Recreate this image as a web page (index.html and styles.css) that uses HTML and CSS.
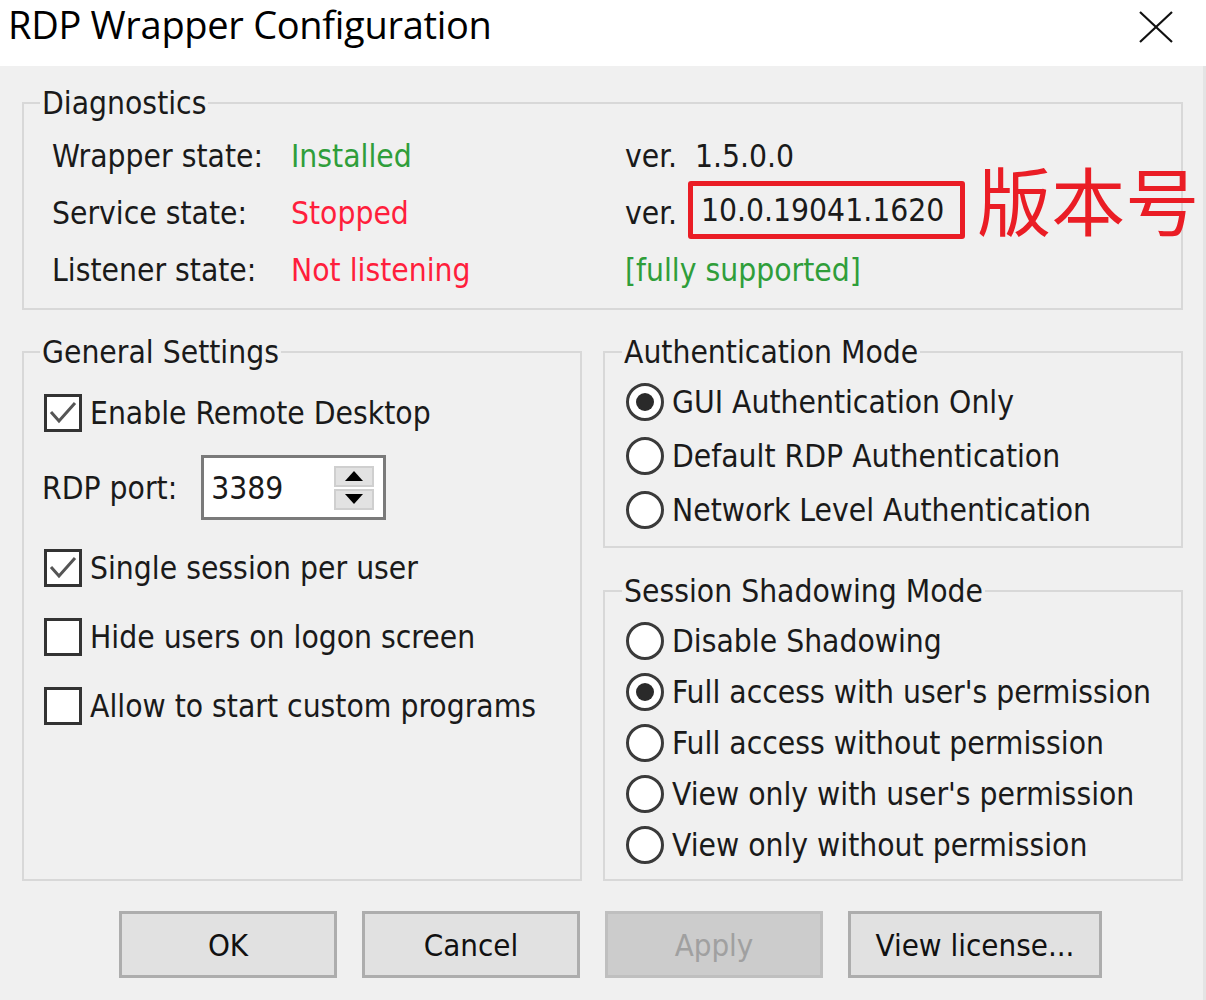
FILE: index.html
```html
<!DOCTYPE html>
<html>
<head>
<meta charset="utf-8">
<title>RDP Wrapper Configuration</title>
<link rel="stylesheet" href="styles.css">
</head>
<body>
<div class="window">
  <div class="titlebar">
    <div class="title">RDP Wrapper Configuration</div>
    <svg class="close" width="34" height="32" viewBox="0 0 34 32"><path d="M1 1 L33 31 M33 1 L1 31" stroke="#111" stroke-width="2.2" fill="none"/></svg>
  </div>
  <div class="content">
    <fieldset class="group diag">
      <legend>Diagnostics</legend>
      <div class="diag-grid">
        <div class="cell">Wrapper state:</div>
        <div class="cell ok">Installed</div>
        <div class="cell">ver.&nbsp; 1.5.0.0</div>
        <div class="cell">Service state:</div>
        <div class="cell bad">Stopped</div>
        <div class="cell">ver.<span class="mark">10.0.19041.1620</span><span class="note">版本号</span></div>
        <div class="cell">Listener state:</div>
        <div class="cell bad">Not listening</div>
        <div class="cell ok">[fully supported]</div>
      </div>
    </fieldset>

    <div class="columns">
      <fieldset class="group general">
        <legend>General Settings</legend>
        <div class="check-row"><span class="box checked"><svg viewBox="0 0 32 32" width="32" height="32"><path d="M4 15 L12 24 L28 6" stroke="#555" stroke-width="3" fill="none"/></svg></span>Enable Remote Desktop</div>
        <div class="port-row">
          <span class="port-label">RDP port:</span>
          <div class="spin">
            <span class="spin-value">3389</span>
            <div class="spin-btns">
              <span class="spin-btn"><svg width="20" height="12" viewBox="0 0 20 12"><path d="M10 1 L19 11 L1 11 Z" fill="#000"/></svg></span>
              <span class="spin-btn"><svg width="20" height="12" viewBox="0 0 20 12"><path d="M1 1 L19 1 L10 11 Z" fill="#000"/></svg></span>
            </div>
          </div>
        </div>
        <div class="check-row"><span class="box checked"><svg viewBox="0 0 32 32" width="32" height="32"><path d="M4 15 L12 24 L28 6" stroke="#555" stroke-width="3" fill="none"/></svg></span>Single session per user</div>
        <div class="check-row"><span class="box"></span>Hide users on logon screen</div>
        <div class="check-row"><span class="box"></span>Allow to start custom programs</div>
      </fieldset>

      <div class="right-col">
        <fieldset class="group auth">
          <legend>Authentication Mode</legend>
          <div class="radio-row"><span class="radio on"></span>GUI Authentication Only</div>
          <div class="radio-row"><span class="radio"></span>Default RDP Authentication</div>
          <div class="radio-row"><span class="radio"></span>Network Level Authentication</div>
        </fieldset>
        <fieldset class="group shadow">
          <legend>Session Shadowing Mode</legend>
          <div class="radio-row"><span class="radio"></span>Disable Shadowing</div>
          <div class="radio-row"><span class="radio on"></span>Full access with user's permission</div>
          <div class="radio-row"><span class="radio"></span>Full access without permission</div>
          <div class="radio-row"><span class="radio"></span>View only with user's permission</div>
          <div class="radio-row"><span class="radio"></span>View only without permission</div>
        </fieldset>
      </div>
    </div>

    <div class="buttons">
      <button class="btn">OK</button>
      <button class="btn">Cancel</button>
      <button class="btn disabled">Apply</button>
      <button class="btn wide">View license...</button>
    </div>
  </div>
</div>
</body>
</html>
```
FILE: styles.css
```css
* { box-sizing: border-box; }
html, body { margin: 0; padding: 0; }
body {
  width: 1206px;
  height: 1000px;
  overflow: hidden;
  font-family: "DejaVu Sans Condensed", "DejaVu Sans", sans-serif;
  color: #1a1a1a;
}
.window {
  width: 1206px;
  height: 1000px;
  background: #f0f0f0;
  box-shadow: inset -3px 0 0 #e4e4e4;
}
.titlebar {
  height: 66px;
  background: #ffffff;
  display: flex;
  align-items: center;
  justify-content: space-between;
  padding: 0 33px 0 8px;
}
.title {
  font-family: "Open Sans", "Noto Sans", sans-serif;
  font-size: 38px;
  color: #000;
  letter-spacing: -0.3px;
  margin-top: -18px;
}
.close { margin-top: -12px; }
.content {
  padding: 0 23px 0 22px;
}
.group {
  margin: 0;
  border: 2px solid #d8d8d8;
  min-width: 0;
}
.group legend {
  font-size: 31.5px;
  line-height: 36px;
  padding: 0 2px;
}
.diag {
  margin-top: 19px;
  padding: 6px 0 10px 28px;
}
.diag legend { margin-left: -12px; }
.diag-grid {
  display: grid;
  grid-template-columns: 239px 334px 1fr;
  grid-auto-rows: 57px;
  font-size: 31.5px;
}
.cell {
  display: flex;
  align-items: center;
  white-space: nowrap;
}
.ok { color: #2f9e3a; }
.bad { color: #ff1e3c; }
.mark {
  display: inline-flex;
  align-items: center;
  height: 58px;
  margin-left: 11px;
  margin-top: -6px;
  padding: 0 16px 0 8px;
  border: 5px solid #ea1d25;
  border-radius: 3px;
}
.note {
  font-family: "Noto Sans CJK SC", sans-serif;
  color: #ea1d25;
  font-size: 74px;
  line-height: 57px;
  margin-left: 12px;
  margin-top: -30px;
}
.columns {
  display: flex;
  gap: 21px;
  margin-top: 24px;
}
.general {
  width: 560px;
  padding: 19px 0 0 20px;
  display: flex;
  flex-direction: column;
  gap: 21px;
}
.general legend { margin-left: -4px; }
.check-row, .radio-row, .port-label {
  font-size: 31.5px;
  white-space: nowrap;
}
.check-row {
  display: flex;
  align-items: center;
  height: 48px;
}
.box {
  width: 38px;
  height: 38px;
  border: 3px solid #333;
  background: #fff;
  margin-right: 8px;
  display: flex;
  align-items: center;
  justify-content: center;
}
.port-row {
  display: flex;
  align-items: center;
  margin: -3px 0 3px -2px;
}
.port-label { margin-right: 24px; }
.spin {
  width: 185px;
  height: 65px;
  border: 3px solid #7a7a7a;
  background: #fff;
  display: flex;
  align-items: center;
  justify-content: space-between;
  padding: 0 9px 0 7px;
  font-size: 31.5px;
}
.spin-btns {
  display: flex;
  flex-direction: column;
  gap: 2px;
}
.spin-btn {
  width: 40px;
  height: 21px;
  background: #e2e2e2;
  border: 2px solid #cfcfcf;
  display: flex;
  align-items: center;
  justify-content: center;
}
.right-col {
  flex: 1;
  display: flex;
  flex-direction: column;
  gap: 25px;
}
.auth { padding: 5px 0 9px 21px; }
.shadow { padding: 6px 0 9px 21px; }
.auth legend, .shadow legend { margin-left: -4px; }
.radio-row {
  display: flex;
  align-items: center;
}
.auth .radio-row { height: 54px; }
.shadow .radio-row { height: 51px; }
.radio {
  width: 38px;
  height: 38px;
  border-radius: 50%;
  border: 3px solid #3a3a3a;
  background: #fff;
  margin-right: 8px;
  display: flex;
  align-items: center;
  justify-content: center;
}
.radio.on::after {
  content: "";
  width: 18px;
  height: 18px;
  border-radius: 50%;
  background: #2a2a2a;
}
.buttons {
  display: flex;
  gap: 25px;
  margin: 30px 0 0 97px;
}
.btn {
  width: 218px;
  height: 67px;
  background: #e1e1e1;
  border: 3px solid #adadad;
  font-family: "DejaVu Sans Condensed", "DejaVu Sans", sans-serif;
  font-size: 31px;
  color: #111;
  padding: 0;
}
.btn.wide { width: 254px; }
.btn.disabled {
  background: #cccccc;
  border-color: #bfbfbf;
  color: #a0a0a0;
}
```
